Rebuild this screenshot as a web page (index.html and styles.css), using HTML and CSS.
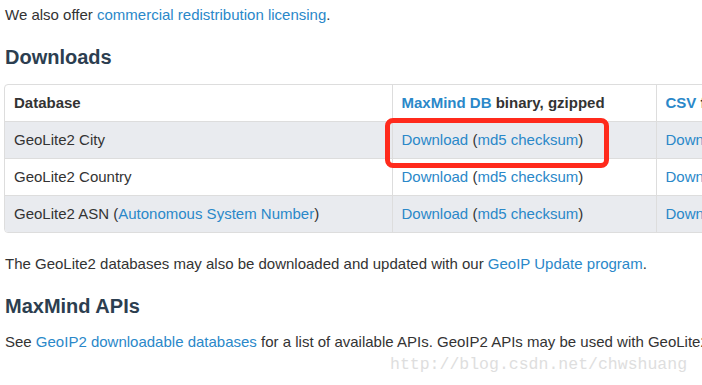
FILE: index.html
```html
<!DOCTYPE html>
<html>
<head>
<meta charset="utf-8">
<link rel="stylesheet" href="styles.css">
</head>
<body>
<div class="page">
  <p class="lead">We also offer <a href="#">commercial redistribution licensing</a>.</p>
  <h2 class="h-downloads">Downloads</h2>
  <div class="table-wrap">
    <table class="dl">
      <colgroup><col class="c1"><col class="c2"><col class="c3"></colgroup>
      <thead>
        <tr><th>Database</th><th><a href="#">MaxMind DB</a> binary, gzipped</th><th><a href="#">CSV</a> format, zipped</th></tr>
      </thead>
      <tbody>
        <tr class="odd"><td>GeoLite2 City</td><td class="marked"><a href="#">Download</a> (<a href="#">md5 checksum</a>)<span class="highlight"></span></td><td><a href="#">Download</a> (<a href="#">md5 checksum</a>)</td></tr>
        <tr><td>GeoLite2 Country</td><td><a href="#">Download</a> (<a href="#">md5 checksum</a>)</td><td><a href="#">Download</a> (<a href="#">md5 checksum</a>)</td></tr>
        <tr class="odd"><td>GeoLite2 ASN (<a href="#">Autonomous System Number</a>)</td><td><a href="#">Download</a> (<a href="#">md5 checksum</a>)</td><td><a href="#">Download</a> (<a href="#">md5 checksum</a>)</td></tr>
      </tbody>
    </table>
  </div>
  <p class="update">The GeoLite2 databases may also be downloaded and updated with our <a href="#">GeoIP Update program</a>.</p>
  <h2 class="h-apis">MaxMind APIs</h2>
  <p class="see">See <a href="#">GeoIP2 downloadable databases</a> for a list of available APIs. GeoIP2 APIs may be used with GeoLite2 databases.</p>
</div>
<div class="watermark">http://blog.csdn.net/chwshuang</div>
</body>
</html>
```
FILE: styles.css
```css
html, body {
  margin: 0;
  padding: 0;
  background: #fff;
  overflow: hidden;
  width: 702px;
  height: 385px;
}
body {
  font-family: "Liberation Sans", Arial, Helvetica, sans-serif;
  font-size: 15px;
  line-height: 20px;
  color: #333;
  position: relative;
}
a {
  color: #2a88c9;
  text-decoration: none;
}
.page {
  padding: 5px 0 0 5px;
  width: 1000px;
}
p {
  margin: 0;
  white-space: nowrap;
}
h2 {
  margin: 0;
  font-size: 20px;
  line-height: 24px;
  font-weight: bold;
  color: #2c3e50;
}
.h-downloads {
  margin-top: 20px;
}
.table-wrap {
  margin-top: 15px;
  margin-left: -1px;
  width: 900px;
  border: 1px solid #ddd;
  border-radius: 4px;
  overflow: hidden;
}
.dl {
  border-collapse: collapse;
  width: 100%;
  table-layout: fixed;
}
.dl .c1 { width: 387px; }
.dl .c2 { width: 264px; }
.dl th, .dl td {
  text-align: left;
  padding: 0 9px;
  height: 36px;
  white-space: nowrap;
  vertical-align: middle;
  border-left: 1px solid #ddd;
}
.dl th:first-child, .dl td:first-child {
  border-left: none;
}
.dl td {
  border-top: 1px solid #ddd;
}
.dl th {
  font-weight: bold;
  color: #333;
  height: 36px;
}
.dl tr.odd td {
  background: #e9ebef;
}
.marked {
  position: relative;
}
.highlight {
  position: absolute;
  left: -8px;
  top: -4px;
  width: 224px;
  height: 50px;
  box-sizing: border-box;
  border: 5px solid #ff2a1c;
  border-radius: 8px;
}
.update {
  margin-top: 21px;
}
.h-apis {
  margin-top: 20px;
}
.see {
  margin-top: 14px;
}
.watermark {
  position: absolute;
  left: 390px;
  top: 355px;
  font-family: "Liberation Mono", "DejaVu Sans Mono", monospace;
  font-size: 16.5px;
  line-height: 20px;
  color: #dedede;
  white-space: nowrap;
}
```
